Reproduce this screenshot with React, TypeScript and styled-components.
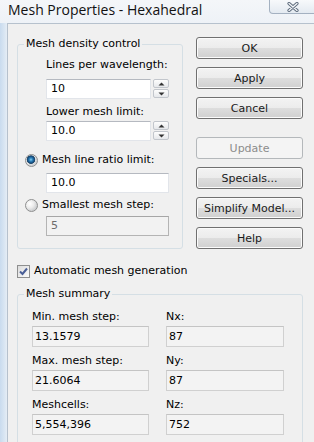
import styled, { createGlobalStyle } from "styled-components";

const GlobalStyle = createGlobalStyle`
  html, body {
    margin: 0;
    padding: 0;
    background: #eef2f7;
  }
  body {
    font-family: "DejaVu Sans", Tahoma, sans-serif;
    font-size: 11px;
    color: #000;
  }
`;

const DENSITY_ROWS = [
  { label: "Lines per wavelength:", value: "10", top: 7, gap: 7 },
  { label: "Lower mesh limit:", value: "10.0", top: 6, gap: 2 },
];

const SUMMARY = [
  ["Min. mesh step:", "13.1579", "Nx:", "87"],
  ["Max. mesh step:", "21.6064", "Ny:", "87"],
  ["Meshcells:", "5,554,396", "Nz:", "752"],
];

const CloseIcon = () => (
  <svg width="12" height="10" viewBox="0 0 12 10">
    <path d="M2 1.5 L10 8.5 M10 1.5 L2 8.5" stroke="#5d6b7c" strokeWidth="3.2" strokeLinecap="round" />
    <path d="M2 1.5 L10 8.5 M10 1.5 L2 8.5" stroke="#f5f7fa" strokeWidth="1.3" strokeLinecap="round" />
  </svg>
);

const Arrow = ({ up }: { up?: boolean }) => (
  <svg width="7" height="4" viewBox="0 0 7 4">
    <path d={up ? "M0.5 3.5 L3.5 0.5 L6.5 3.5 Z" : "M0.5 0.5 L3.5 3.5 L6.5 0.5 Z"} fill="#333" />
  </svg>
);

const CheckMark = () => (
  <svg width="11" height="11" viewBox="0 0 11 11">
    <path d="M2 5.5 L4.5 8 L9 2.5" fill="none" stroke="#4a5f97" strokeWidth="2" />
  </svg>
);

const App = () => {
  return (
    <Window>
      <GlobalStyle />
      <TitleBar>
        <Title>Mesh Properties - Hexahedral</Title>
        <CloseButton>
          <CloseIcon />
        </CloseButton>
      </TitleBar>
      <Body>
        <TopSection>
          <DensityGroup>
            <Legend>Mesh density control</Legend>
            <GroupContent>
              {DENSITY_ROWS.map((row) => (
                <div key={row.label}>
                  <FieldLabel $indent $top={row.top}>{row.label}</FieldLabel>
                  <SpinRow $top={row.gap}>
                    <TextField $width={105}>{row.value}</TextField>
                    <Spinner>
                      <SpinButton><Arrow up /></SpinButton>
                      <SpinButton><Arrow /></SpinButton>
                    </Spinner>
                  </SpinRow>
                </div>
              ))}
              <RadioRow $top={12}>
                <Radio $checked />
                Mesh line ratio limit:
              </RadioRow>
              <TextField $width={123} $top={6} $indent>10.0</TextField>
              <RadioRow $top={5}>
                <Radio />
                Smallest mesh step:
              </RadioRow>
              <TextField $width={123} $top={4} $indent $disabled>5</TextField>
            </GroupContent>
          </DensityGroup>
          <ButtonColumn>
            <Button>OK</Button>
            <Button>Apply</Button>
            <Button>Cancel</Button>
            <Button disabled $top={18}>Update</Button>
            <Button>Specials...</Button>
            <Button>Simplify Model...</Button>
            <Button>Help</Button>
          </ButtonColumn>
        </TopSection>
        <CheckRow>
          <CheckBox>
            <CheckMark />
          </CheckBox>
          Automatic mesh generation
        </CheckRow>
        <SummaryGroup>
          <Legend>Mesh summary</Legend>
          <SummaryGrid>
            {SUMMARY.map(([l1, v1, l2, v2]) => (
              <SummaryRow key={l1}>
                <SummaryCell>
                  <SummaryLabel>{l1}</SummaryLabel>
                  <ReadOnlyField>{v1}</ReadOnlyField>
                </SummaryCell>
                <SummaryCell>
                  <SummaryLabel>{l2}</SummaryLabel>
                  <ReadOnlyField>{v2}</ReadOnlyField>
                </SummaryCell>
              </SummaryRow>
            ))}
          </SummaryGrid>
        </SummaryGroup>
      </Body>
    </Window>
  );
};

export default App;

const Window = styled.div`
  width: 314px;
  height: 442px;
  overflow: hidden;
  display: flex;
  flex-direction: column;
  background: linear-gradient(to right, #c9dbee 0px, #d8e5f2 4px, #eef2f7 9px);
`;

const TitleBar = styled.div`
  height: 23px;
  flex-shrink: 0;
  display: flex;
  align-items: flex-start;
  background: linear-gradient(#f4f6f9, #eef2f7);
`;

const Title = styled.div`
  font: 14px "Open Sans", "Noto Sans", sans-serif;
  line-height: 20px;
  padding-left: 8px;
  color: #111;
`;

const CloseButton = styled.div`
  margin-left: auto;
  margin-right: -3px;
  width: 48px;
  height: 14px;
  flex-shrink: 0;
  box-sizing: border-box;
  border: 1px solid #a4b1c1;
  border-top: none;
  border-radius: 0 0 4px 4px;
  background: linear-gradient(#f7f9fb, #e4eaf1);
  display: flex;
  align-items: center;
  justify-content: center;
`;

const Body = styled.div`
  flex: 1;
  margin-left: 7px;
  border-top: 1px solid #b6c1cd;
  border-left: 1px solid #b6c1cd;
  background: #f0f0f0;
  padding: 13px 0 0 9px;
`;

const TopSection = styled.div`
  display: flex;
  align-items: flex-start;
`;

const Group = styled.fieldset`
  margin: 0;
  padding: 0;
  border: 1px solid #d5dfe5;
  border-radius: 3px;
  min-width: 0;
`;

const DensityGroup = styled(Group)`
  width: 166px;
  box-sizing: border-box;
`;

const Legend = styled.legend`
  margin-left: 6px;
  padding: 0 2px;
  line-height: 14px;
`;

const GroupContent = styled.div`
  display: flex;
  flex-direction: column;
  align-items: flex-start;
  padding: 0 0 12px 7px;
`;

const FieldLabel = styled.div<{ $indent?: boolean; $top?: number }>`
  line-height: 14px;
  margin-top: ${({ $top }) => $top ?? 0}px;
  margin-left: ${({ $indent }) => ($indent ? 21 : 0)}px;
`;

const SpinRow = styled.div<{ $top: number }>`
  display: flex;
  gap: 2px;
  margin-top: ${({ $top }) => $top}px;
  margin-left: 21px;
`;

const TextField = styled.div<{ $width: number; $top?: number; $indent?: boolean; $disabled?: boolean }>`
  width: ${({ $width }) => $width}px;
  height: 20px;
  box-sizing: border-box;
  margin-top: ${({ $top }) => $top ?? 0}px;
  margin-left: ${({ $indent }) => ($indent ? 21 : 0)}px;
  padding-left: 4px;
  line-height: 18px;
  border: 1px solid ${({ $disabled }) => ($disabled ? "#b4b4b4" : "#e2e5ea")};
  border-top-color: ${({ $disabled }) => ($disabled ? "#a6a6a6" : "#b5b9c0")};
  background: ${({ $disabled }) => ($disabled ? "#f2f2f2" : "#ffffff")};
  color: ${({ $disabled }) => ($disabled ? "#6d6d6d" : "#000")};
`;

const Spinner = styled.div`
  display: flex;
  flex-direction: column;
  gap: 1px;
`;

const SpinButton = styled.div`
  width: 16px;
  height: 9px;
  box-sizing: border-box;
  border: 1px solid #c2c6cc;
  border-radius: 2px;
  background: linear-gradient(#fdfdfd, #e6e8eb);
  display: flex;
  align-items: center;
  justify-content: center;
`;

const RadioRow = styled.div<{ $top: number }>`
  display: flex;
  align-items: center;
  gap: 4px;
  line-height: 14px;
  margin-top: ${({ $top }) => $top}px;
`;

const Radio = styled.span<{ $checked?: boolean }>`
  width: 13px;
  height: 13px;
  box-sizing: border-box;
  border-radius: 50%;
  border: 1px solid #8e8f8f;
  background: ${({ $checked }) =>
      $checked
        ? "radial-gradient(circle at 45% 42%, #8fd0f0 0px, #2f86c0 1.6px, #14497a 3.4px, #2a4f6e 4px, transparent 4.6px), "
        : ""}
    radial-gradient(circle at 35% 35%, #ffffff 0px, #ececec 4px, #cfd1d3 7px);
`;

const ButtonColumn = styled.div`
  display: flex;
  flex-direction: column;
  gap: 8px;
  margin-left: 13px;
`;

const Button = styled.button<{ $top?: number }>`
  width: 107px;
  height: 22px;
  margin: ${({ $top }) => ($top ? $top - 8 : 0)}px 0 0;
  padding: 0;
  font: 11px "DejaVu Sans", Tahoma, sans-serif;
  color: #1a1a1a;
  border: 1px solid #707070;
  border-radius: 3px;
  background: linear-gradient(#f3f3f3 0%, #ececec 48%, #dddddd 52%, #d0d0d0 100%);
  box-shadow: inset 0 0 0 1px #fbfbfb;

  &:disabled {
    border-color: #b4b8bb;
    background: #f4f4f4;
    color: #8c8c8c;
    box-shadow: none;
  }
`;

const CheckRow = styled.div`
  display: flex;
  align-items: center;
  gap: 4px;
  line-height: 14px;
  margin-top: 15px;
`;

const CheckBox = styled.span`
  width: 13px;
  height: 13px;
  box-sizing: border-box;
  border: 1px solid #8e8f8f;
  background: linear-gradient(135deg, #dcdcdc, #fbfbfb);
  display: flex;
  align-items: center;
  justify-content: center;
`;

const SummaryGroup = styled(Group)`
  width: 286px;
  box-sizing: border-box;
  margin-top: 9px;
`;

const SummaryGrid = styled.div`
  display: flex;
  flex-direction: column;
  gap: 7px;
  padding: 9px 0 10px 14px;
`;

const SummaryRow = styled.div`
  display: grid;
  grid-template-columns: 117px 118px;
  column-gap: 17px;
`;

const SummaryCell = styled.div`
  display: flex;
  flex-direction: column;
  gap: 2px;
`;

const SummaryLabel = styled.div`
  line-height: 14px;
`;

const ReadOnlyField = styled.div`
  height: 21px;
  box-sizing: border-box;
  padding-left: 2px;
  line-height: 19px;
  border: 1px solid #d0d0d0;
  border-top-color: #c4c4c4;
  background: #f3f3f3;
`;
